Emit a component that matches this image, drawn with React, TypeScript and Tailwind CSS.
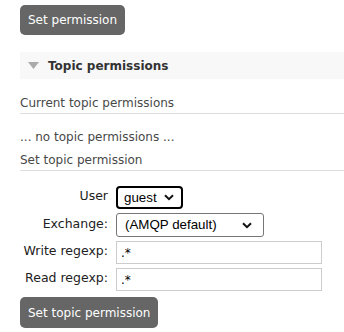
import React from "react";

const Chevron = () => (
  <svg width="10" height="7" viewBox="0 0 10 7" className="shrink-0">
    <path d="M1 1.2 L5 5.2 L9 1.2" fill="none" stroke="#111" strokeWidth="2" />
  </svg>
);

const FormRow = ({ label, children }: { label: string; children: React.ReactNode }) => (
  <>
    <div className="text-right text-[12.5px] leading-none pb-[2px]">{label}</div>
    <div>{children}</div>
  </>
);

export default function App() {
  return (
    <div className="w-[344px] h-[332px] overflow-hidden bg-white pl-[20px] text-[#484848] font-['DejaVu_Sans',Verdana,sans-serif]">
      <button className="mt-[5px] h-[30px] px-[8px] rounded-[5px] bg-[#666] text-white text-[12px]">
        Set permission
      </button>

      <div className="mt-[17px] h-[27px] bg-[#f8f8f8] flex items-center pl-[8px] gap-[9px]">
        <svg width="11" height="7" viewBox="0 0 11 7">
          <path d="M0 0 H11 L5.5 7 Z" fill="#aaa" />
        </svg>
        <span className="font-bold text-[12px] text-[#333]">Topic permissions</span>
      </div>

      <div className="mt-[17px] text-[12px] leading-[14px] pb-[3px] border-b border-[#ddd]">Current topic permissions</div>
      <p className="mt-[16px] text-[12px] leading-[14px]">... no topic permissions ...</p>
      <div className="mt-[9px] text-[12px] leading-[14px] pb-[3px] border-b border-[#ddd]">Set topic permission</div>

      <div className="mt-[15px] grid grid-cols-[88px_auto] gap-x-[8px] gap-y-[4px] items-center text-[#222]">
        <FormRow label="User">
          <div className="w-[67px] h-[23px] border-2 border-black rounded-[4px] flex items-center justify-between pl-[6px] pr-[7px] font-['Liberation_Sans',Arial,sans-serif] text-[13.33px] text-black">
            guest
            <Chevron />
          </div>
        </FormRow>
        <FormRow label="Exchange:">
          <div className="w-[148px] h-[24px] border border-[#767676] rounded-[3px] flex items-center justify-between pl-[8px] pr-[11px] font-['Liberation_Sans',Arial,sans-serif] text-[13.33px] text-black">
            (AMQP default)
            <Chevron />
          </div>
        </FormRow>
        <FormRow label="Write regexp:">
          <div className="w-[206px] h-[23px] border border-[#ccc] flex items-center pl-[4px] text-[12px] text-black">.*</div>
        </FormRow>
        <FormRow label="Read regexp:">
          <div className="w-[206px] h-[23px] border border-[#ccc] flex items-center pl-[4px] text-[12px] text-black">.*</div>
        </FormRow>
      </div>

      <button className="mt-[6px] h-[31px] px-[8px] rounded-[5px] bg-[#666] text-white text-[12px]">
        Set topic permission
      </button>
    </div>
  );
}
